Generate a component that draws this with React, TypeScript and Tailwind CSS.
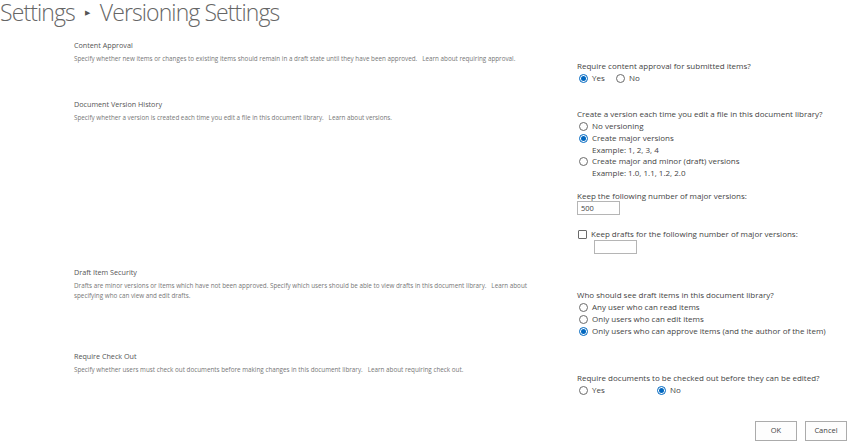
import React from "react";

const Radio = ({ checked }: { checked?: boolean }) => (
  <span className={`inline-flex items-center justify-center w-[9px] h-[9px] rounded-full border bg-white shrink-0 ${checked ? "border-[#0067c0]" : "border-[#6b6b6b]"}`}>
    {checked && <span className="w-[5px] h-[5px] rounded-full bg-[#0067c0]" />}
  </span>
);

const Opt = ({ label, checked, className = "" }: { label: string; checked?: boolean; className?: string }) => (
  <div className={`flex items-center gap-[4px] h-[12px] pl-[2px] ${className}`}>
    <Radio checked={checked} />
    <span>{label}</span>
  </div>
);

const Left = ({ title, children }: { title: string; children: React.ReactNode }) => (
  <div className="w-[470px] shrink-0">
    <div className="text-[7.2px] leading-[14px] text-[#555]">{title}</div>
    <div className="mt-[2px] text-[6.3px] leading-[10px] text-[#777]">{children}</div>
  </div>
);

export default function App() {
  return (
    <div className="w-[850px] h-[446px] bg-white overflow-hidden text-[#444]" style={{ fontFamily: '"Open Sans", "Noto Sans", sans-serif' }}>
      <h1 className="text-[23px] leading-[24px] font-light tracking-[-0.9px] text-[#666] -mt-[2px] flex items-center whitespace-nowrap">
        <span>Settings</span>
        <span className="text-[7px] text-[#555] mx-[10px] mt-[3px] tracking-normal">▶</span>
        <span>Versioning Settings</span>
      </h1>

      <div className="mt-[13px] pl-[74px] text-[8px]">
        {/* Content Approval */}
        <section className="flex h-[59px]">
          <Left title="Content Approval">
            Specify whether new items or changes to existing items should remain in a draft state until they have been approved.&nbsp;&nbsp; Learn about requiring approval.
          </Left>
          <div className="ml-[33px] pt-[22px] leading-[12px]">
            <div>Require content approval for submitted items?</div>
            <div className="flex">
              <Opt label="Yes" checked className="w-[37px]" />
              <Opt label="No" />
            </div>
          </div>
        </section>

        {/* Document Version History */}
        <section className="flex h-[168px]">
          <Left title="Document Version History">
            Specify whether a version is created each time you edit a file in this document library.&nbsp;&nbsp; Learn about versions.
          </Left>
          <div className="ml-[33px] pt-[11px] leading-[12px]">
            <div>Create a version each time you edit a file in this document library?</div>
            <Opt label="No versioning" />
            <Opt label="Create major versions" checked />
            <div className="pl-[15px] leading-[11px]">Example: 1, 2, 3, 4</div>
            <Opt label="Create major and minor (draft) versions" />
            <div className="pl-[15px] leading-[11px]">Example: 1.0, 1.1, 1.2, 2.0</div>
            <div className="mt-[12px]">Keep the following number of major versions:</div>
            <div className="mt-[-1px] w-[43px] h-[14px] border border-[#b5b5b5] px-[3px] text-[7.5px] leading-[12px]">500</div>
            <div className="mt-[13px] flex items-center gap-[4px] pl-[1px] h-[12px]">
              <span className="w-[9px] h-[9px] border border-[#6b6b6b] rounded-[1px] bg-white" />
              <span>Keep drafts for the following number of major versions:</span>
            </div>
            <div className="ml-[17px] w-[43px] h-[14px] border border-[#b5b5b5]" />
          </div>
        </section>

        {/* Draft Item Security */}
        <section className="flex h-[84px]">
          <Left title="Draft Item Security">
            Drafts are minor versions or items which have not been approved. Specify which users should be able to view drafts in this document library.&nbsp;&nbsp; Learn about specifying who can view and edit drafts.
          </Left>
          <div className="ml-[33px] pt-[24px] leading-[12px] whitespace-nowrap">
            <div>Who should see draft items in this document library?</div>
            <Opt label="Any user who can read items" />
            <Opt label="Only users who can edit items" />
            <Opt label="Only users who can approve items (and the author of the item)" checked />
          </div>
        </section>

        {/* Require Check Out */}
        <section className="flex h-[51px]">
          <Left title="Require Check Out">
            Specify whether users must check out documents before making changes in this document library.&nbsp;&nbsp; Learn about requiring check out.
          </Left>
          <div className="ml-[33px] pt-[23px] leading-[12px] whitespace-nowrap">
            <div>Require documents to be checked out before they can be edited?</div>
            <div className="flex">
              <Opt label="Yes" className="w-[78px]" />
              <Opt label="No" checked />
            </div>
          </div>
        </section>

        <div className="mt-[21px] flex justify-end gap-[8px] pr-[3px]">
          <button className="w-[42px] h-[20px] border border-[#ababab] bg-[#fdfdfd] text-[7.5px] text-[#444]">OK</button>
          <button className="w-[42px] h-[20px] border border-[#ababab] bg-[#fdfdfd] text-[7.5px] text-[#444]">Cancel</button>
        </div>
      </div>
    </div>
  );
}
